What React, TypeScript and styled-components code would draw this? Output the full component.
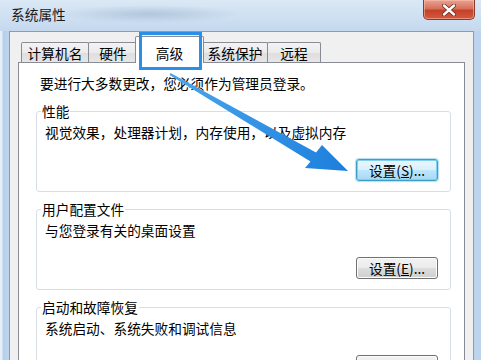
import React from 'react';
import styled, { createGlobalStyle } from 'styled-components';

const GlobalStyle = createGlobalStyle`
  html, body {
    margin: 0;
    padding: 0;
    background: #ffffff;
  }
  body {
    font-family: 'Noto Sans CJK SC', 'Liberation Sans', sans-serif;
    font-size: 13.7px;
    color: #000000;
  }
`;

const Window = styled.div`
  position: relative;
  width: 481px;
  height: 360px;
  overflow: hidden;
  display: flex;
  flex-direction: column;
  background: linear-gradient(90deg, #e6eff8 0, #e6eff8 2px, #b4cfeb 3px, #bcd4ed 8px, #bcd4ed 100%);
`;

const TitleBar = styled.div`
  height: 31px;
  flex: none;
  display: flex;
  align-items: flex-start;
  background:
    radial-gradient(ellipse 90px 9px at 150px 14px, rgba(140, 165, 195, 0.45), rgba(140, 165, 195, 0) 100%),
    linear-gradient(180deg, #dbe8f5 0%, #cddff1 60%, #c4d8ee 100%);
`;

const Title = styled.span`
  margin: 6px 0 0 11px;
  line-height: 17px;
  color: #1a1a1a;
`;

const CloseButton = styled.div`
  margin-left: auto;
  margin-right: 6px;
  width: 52px;
  height: 20px;
  box-sizing: border-box;
  display: flex;
  align-items: center;
  justify-content: center;
  border: 1px solid #8a3a2c;
  border-top: none;
  border-radius: 0 0 5px 5px;
  background: linear-gradient(180deg, #e8a493 0%, #d7705a 45%, #c4412a 55%, #d45a3e 100%);
  box-shadow: inset 0 0 0 1px rgba(255, 200, 185, 0.5);
`;

const Panel = styled.div`
  flex: 1;
  margin: 0 7px 0 9px;
  padding: 4px 8px 0 8px;
  background: #f0f0f0;
  border: 1px solid #8c9cb0;
  border-bottom: none;
  display: flex;
  flex-direction: column;
`;

const TabStrip = styled.div`
  display: flex;
  align-items: flex-end;
  height: 26px;
  margin-left: 3px;
`;

const Tab = styled.div<{ $width: number; $selected?: boolean }>`
  position: relative;
  box-sizing: border-box;
  width: ${(p) => p.$width}px;
  height: ${(p) => (p.$selected ? 27 : 20)}px;
  margin: ${(p) => (p.$selected ? '0 -2px -1px -2px' : '0 -1px 0 0')};
  padding-top: ${(p) => (p.$selected ? 5 : 0)}px;
  display: flex;
  align-items: center;
  justify-content: center;
  border: 1px solid #898c95;
  border-bottom: none;
  border-radius: 2px 2px 0 0;
  background: ${(p) =>
    p.$selected ? '#ffffff' : 'linear-gradient(180deg, #f3f3f3 0%, #ebebeb 50%, #dedede 51%, #e6e6e6 100%)'};
  z-index: ${(p) => (p.$selected ? 2 : 1)};
  line-height: 16px;
  white-space: nowrap;
`;

const Page = styled.div`
  flex: 1;
  background: #ffffff;
  border: 1px solid #898c95;
  border-bottom: none;
  padding: 12px 13px 0 17px;
  display: flex;
  flex-direction: column;
`;

const Intro = styled.div`
  margin-left: 4px;
  line-height: 16px;
`;

const Group = styled.fieldset`
  margin: 12px 0 0 0;
  padding: 0 12px 10px 8px;
  border: 1px solid #d5dfe5;
  border-radius: 3px;
  display: flex;
  flex-direction: column;

  & + & {
    margin-top: 9px;
  }
`;

const Legend = styled.legend`
  margin-left: -4px;
  padding: 0 1px;
  line-height: 16px;
`;

const Desc = styled.div`
  margin-top: 5px;
  line-height: 16px;
`;

const ButtonRow = styled.div`
  display: flex;
  justify-content: flex-end;
  margin-top: 19px;
`;

const Button = styled.button<{ $focused?: boolean }>`
  width: 82px;
  height: 22px;
  padding: 0;
  font-family: inherit;
  font-size: 13.7px;
  line-height: 16px;
  color: #000000;
  border-radius: 3px;
  border: 1px solid ${(p) => (p.$focused ? '#3d9ec4' : '#707070')};
  background: ${(p) =>
    p.$focused
      ? 'linear-gradient(180deg, #eaf6fd 0%, #d9f0fc 50%, #bee6fd 51%, #a7d9f5 100%)'
      : 'linear-gradient(180deg, #f2f2f2 0%, #ebebeb 50%, #dddddd 51%, #cfcfcf 100%)'};
  box-shadow: ${(p) =>
    p.$focused
      ? 'inset 0 0 0 1px #7fd0f0, 0 0 1px 1px rgba(90, 180, 230, 0.45)'
      : 'inset 0 0 0 1px #fcfcfc'};
  white-space: nowrap;
`;

const Key = styled.span`
  text-decoration: underline;
`;

const Highlight = styled.div`
  position: absolute;
  left: 139px;
  top: 32px;
  width: 63px;
  height: 38px;
  box-sizing: border-box;
  border: 3px solid #2a8fe6;
  z-index: 5;
  pointer-events: none;
`;

const ArrowLayer = styled.svg`
  position: absolute;
  left: 0;
  top: 0;
  z-index: 6;
  pointer-events: none;
`;

const tabs = [
  { label: '计算机名', width: 68 },
  { label: '硬件', width: 50 },
  { label: '高级', width: 69, selected: true },
  { label: '系统保护', width: 66 },
  { label: '远程', width: 54 },
];

const groups = [
  {
    title: '性能',
    desc: '视觉效果，处理器计划，内存使用，以及虚拟内存',
    key: 'S',
    focused: true,
  },
  { title: '用户配置文件', desc: '与您登录有关的桌面设置', key: 'E' },
  { title: '启动和故障恢复', desc: '系统启动、系统失败和调试信息', key: 'T' },
];

const App: React.FC = () => {
  return (
    <Window>
      <GlobalStyle />
      <TitleBar>
        <Title>系统属性</Title>
        <CloseButton>
          <svg width="14" height="12" viewBox="0 0 14 12">
            <path d="M2 1.5 L12 10.5 M12 1.5 L2 10.5" stroke="#6b2a1f" strokeWidth="4" strokeLinecap="round" />
            <path d="M2 1.5 L12 10.5 M12 1.5 L2 10.5" stroke="#ffffff" strokeWidth="2.4" strokeLinecap="round" />
          </svg>
        </CloseButton>
      </TitleBar>

      <Panel>
        <TabStrip>
          {tabs.map((tab) => (
            <Tab key={tab.label} $width={tab.width} $selected={tab.selected}>
              {tab.label}
            </Tab>
          ))}
        </TabStrip>
        <Page>
          <Intro>要进行大多数更改，您必须作为管理员登录。</Intro>
          {groups.map((group) => (
            <Group key={group.title}>
              <Legend>{group.title}</Legend>
              <Desc>{group.desc}</Desc>
              <ButtonRow>
                <Button $focused={group.focused}>
                  设置(<Key>{group.key}</Key>)...
                </Button>
              </ButtonRow>
            </Group>
          ))}
        </Page>
      </Panel>

      <Highlight />
      <ArrowLayer width="481" height="360" viewBox="0 0 481 360">
        <defs>
          <linearGradient id="arrowFill" x1="170" y1="74" x2="348" y2="171" gradientUnits="userSpaceOnUse">
            <stop offset="0" stopColor="#4aa6ee" />
            <stop offset="1" stopColor="#1c7fdc" />
          </linearGradient>
        </defs>
        <polygon
          points="169.5,74.9 170.5,73.1 316,152.5 322,145 348,171 305,168 310.5,161.5"
          fill="url(#arrowFill)"
        />
      </ArrowLayer>
    </Window>
  );
};

export default App;
